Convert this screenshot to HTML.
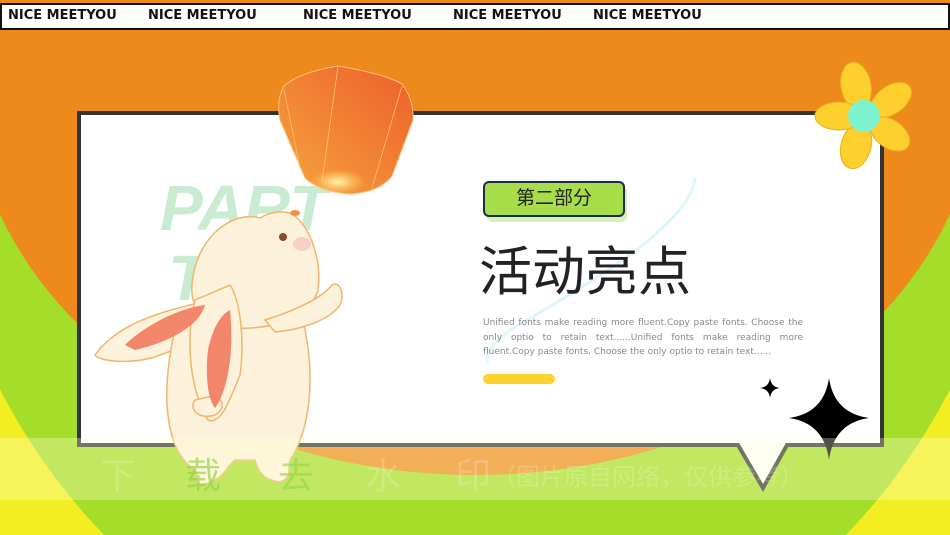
<!DOCTYPE html>
<html><head><meta charset="utf-8"><style>
*{margin:0;padding:0}
html,body{width:950px;height:535px;overflow:hidden}
body{position:relative;background:#F3EE22;font-family:"DejaVu Sans","Liberation Sans","Noto Sans CJK SC",sans-serif}
.bar{position:absolute;left:0;top:3px;width:946px;height:23px;background:#fff;border:2px solid #111}
.bar span{position:absolute;top:3px;font-weight:bold;font-size:13px;color:#111;white-space:nowrap}
.abs{position:absolute}
</style></head><body>
<svg class="abs" style="left:0;top:0" width="950" height="535">
<ellipse cx="475" cy="80" rx="549" ry="617" fill="#A4DE2A"/>
<ellipse cx="475" cy="80" rx="505" ry="395" fill="#EE891C"/>
<rect x="0" y="0" width="950" height="40" fill="#EE891C"/>
<path d="M79 113 H882 V445 H787 L763 488 L738 445 H79 Z" fill="#fff" stroke="#333" stroke-width="4"/>
<text x="160" y="230" font-family="Liberation Sans" font-weight="bold" font-style="italic" font-size="64" fill="#C9EBD1">PART</text>
<text x="168" y="300" font-family="Liberation Sans" font-weight="bold" font-style="italic" font-size="64" fill="#C9EBD1">TWO</text>
<path d="M695 178 C690 230 560 300 510 330 C490 345 485 355 488 362" fill="none" stroke="#DDF6FB" stroke-width="3"/>
<defs>
<linearGradient id="lg" x1="0" y1="1" x2="1" y2="0"><stop offset="0" stop-color="#F7A43E"/><stop offset="1" stop-color="#EC5F2A"/></linearGradient>
<radialGradient id="gl" cx="0.5" cy="0.5" r="0.5"><stop offset="0" stop-color="#FFF6B0"/><stop offset="1" stop-color="#FFD060" stop-opacity="0"/></radialGradient>
</defs>
<path d="M284 86 Q300 72 338 66 Q385 74 402 84 Q414 100 413 120 L392 176 Q380 192 350 194 Q320 192 305 178 L280 120 Q276 100 284 86 Z" fill="url(#lg)" stroke="#F7C27A" stroke-width="1"/>
<path d="M338 66 L322 182 M402 86 L372 188 M284 90 L300 168" stroke="#F9C278" stroke-width="0.8" fill="none"/>
<ellipse cx="338" cy="182" rx="28" ry="13" fill="url(#gl)"/>
<g stroke="#EFB66C" stroke-width="1.5" fill="#FCF2DB">
<path d="M210 300 C170 310 120 320 95 355 C100 362 135 365 160 355 C190 345 215 330 230 310 Z"/>
<path d="M175 330 C160 395 165 450 195 470 C200 478 190 485 205 484 C225 478 225 468 235 460 L255 460 C258 470 262 480 280 482 C292 478 288 470 290 460 C310 430 315 380 305 330 C300 300 260 290 230 300 Z"/>
<path d="M260 218 C230 210 195 240 192 285 C190 310 205 325 235 328 C270 330 310 318 318 290 C322 260 310 225 292 214 C282 210 270 212 260 218 Z"/>
<path d="M265 320 C290 312 320 300 332 285 C340 280 345 295 340 305 C330 320 300 330 275 332 Z"/>
<path d="M195 300 C185 340 190 390 208 420 C220 425 228 405 240 375 C245 340 240 300 230 285 Z"/>
<path d="M195 400 C188 410 200 420 215 415 C225 410 225 398 212 396 Z"/>
</g>
<path d="M125 345 C145 325 180 308 205 305 C200 325 170 342 135 350 Z" fill="#F2866A"/>
<path d="M208 350 C205 375 208 400 215 408 C225 395 235 360 230 310 C220 315 212 330 208 350 Z" fill="#F2866A"/>
<circle cx="283" cy="237" r="4" fill="#8A4A2A"/>
<ellipse cx="302" cy="244" rx="9" ry="7" fill="#F8CFC5"/>
<ellipse cx="295" cy="213" rx="5" ry="3" fill="#F29040"/>
<g fill="#FDD02E" stroke="#E8B020" stroke-width="1">
<ellipse cx="856" cy="86" rx="15" ry="24" transform="rotate(-10 856 86)"/>
<ellipse cx="891" cy="100" rx="14" ry="23" transform="rotate(55 891 100)"/>
<ellipse cx="890" cy="134" rx="14" ry="22" transform="rotate(-55 890 134)"/>
<ellipse cx="856" cy="146" rx="15" ry="23" transform="rotate(15 856 146)"/>
<ellipse cx="839" cy="116" rx="24" ry="14"/>
</g>
<circle cx="864" cy="116" r="16" fill="#7DF2CF"/>
<path d="M829 378 Q834 413 869 418 Q834 423 829 460 Q824 423 789 418 Q824 413 829 378 Z" fill="#000"/>
<path d="M770 378 Q771 387 780 388 Q771 389 770 398 Q769 389 760 388 Q769 387 770 378 Z" fill="#000"/>
<rect x="0" y="438" width="950" height="62" fill="rgba(255,255,210,0.32)"/>
<text x="100" y="488" font-family="Noto Sans CJK SC" font-size="36" fill="rgba(255,255,255,0.18)">下</text>
<text x="185" y="488" font-family="Noto Sans CJK SC" font-size="36" fill="rgba(150,210,80,0.7)">载</text>
<text x="278" y="488" font-family="Noto Sans CJK SC" font-size="36" fill="rgba(150,210,80,0.6)">去</text>
<text x="365" y="488" font-family="Noto Sans CJK SC" font-size="36" fill="rgba(255,255,255,0.2)">水</text>
<text x="455" y="488" font-family="Noto Sans CJK SC" font-size="36" fill="rgba(255,255,255,0.2)">印</text>
<text x="492" y="485" font-family="Noto Sans CJK SC" font-size="24" fill="rgba(255,255,255,0.2)">（图片原自网络，仅供参考）</text>
</svg>
<div class="bar">
<span style="left:6px">NICE MEETYOU</span><span style="left:146px">NICE MEETYOU</span><span style="left:301px">NICE MEETYOU</span><span style="left:451px">NICE MEETYOU</span><span style="left:591px">NICE MEETYOU</span>
</div>
<div class="abs" style="left:487px;top:186px;width:140px;height:36px;background:#D6F0B8;border-radius:6px"></div>
<div class="abs" style="left:483px;top:181px;width:138px;height:32px;background:#A8DD4A;border:2px solid #1E2A4A;border-radius:6px;font-family:'Liberation Sans','Noto Sans CJK SC',sans-serif;font-size:19px;color:#222;text-align:center;line-height:32px">第二部分</div>
<div class="abs" style="left:479px;top:241px;font-family:'Liberation Sans','Noto Sans CJK SC',sans-serif;font-size:53px;color:#222;line-height:64px">活动亮点</div>
<div class="abs" style="left:483px;top:316px;width:320px;font-size:9px;color:#888;line-height:14.7px;text-align:justify">Unified fonts make reading more fluent.Copy paste fonts. Choose the only optio to retain text......Unified fonts make reading more fluent.Copy paste fonts. Choose the only optio to retain text......</div>
<div class="abs" style="left:483px;top:374px;width:72px;height:10px;background:#FDD22E;border-radius:5px"></div>
</body></html>
